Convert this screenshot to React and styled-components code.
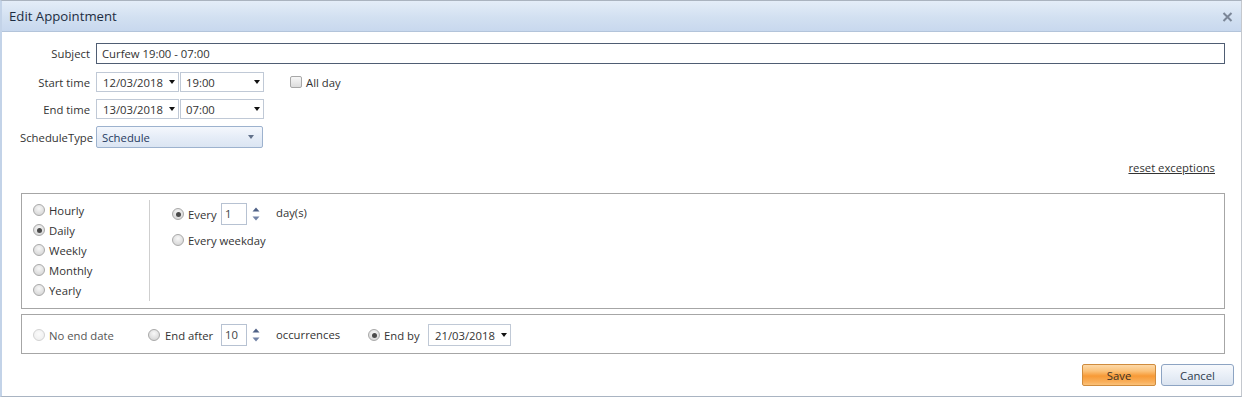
import React from "react";
import styled, { createGlobalStyle, css } from "styled-components";

const GlobalStyle = createGlobalStyle`
  html, body { margin: 0; padding: 0; background: #ffffff; }
  body { font-family: "Open Sans", "Noto Sans", sans-serif; font-size: 11.3px; color: #333333; }
  * { box-sizing: border-box; }
`;

const Dialog = styled.div`
  width: 1242px;
  height: 397px;
  border-top: 1px solid #aab3bf;
  border-left: 2px solid #c3d3e8;
  border-right: 1px solid #c4c8ce;
  border-bottom: 1px solid #a9b4c2;
  display: flex;
  flex-direction: column;
  background: #fff;
`;

const TitleBar = styled.div`
  height: 31px;
  flex: none;
  display: flex;
  align-items: center;
  justify-content: space-between;
  padding: 0 8px 0 7px;
  background: linear-gradient(#e4edf8, #d2e0f1 55%, #c8d8ee);
  border-bottom: 1px solid #b3c4da;
`;

const Title = styled.div`
  font-size: 13.2px;
  color: #1d2d42;
  margin-top: -1px;
`;

const Close = styled.button`
  border: 0;
  background: none;
  padding: 0;
  width: 11px;
  height: 10px;
  display: flex;
  margin-top: 1px;
`;

const Body = styled.div`
  flex: 1;
  display: flex;
  flex-direction: column;
  padding: 11px 16px 9px 18px;
`;

const FormRow = styled.div`
  display: flex;
  align-items: center;
  height: ${(p) => p.$h}px;
  margin-top: ${(p) => p.$mt || 0}px;
`;

const Label = styled.div`
  width: 76px;
  flex: none;
  padding-right: 6px;
  text-align: right;
  white-space: nowrap;
  color: #333;
`;

const TextInput = styled.input`
  flex: 1;
  height: 21px;
  border: 1px solid #4f5d73;
  padding: 0 5px;
  font: inherit;
  color: #333;
  outline: none;
`;

const DropBox = styled.div`
  width: ${(p) => p.$w}px;
  height: 20px;
  flex: none;
  display: flex;
  align-items: center;
  justify-content: space-between;
  border: 1px solid #c0c9d6;
  padding: 0 ${(p) => p.$pr}px 0 ${(p) => p.$pl}px;
  margin-left: ${(p) => p.$ml || 0}px;
  color: #333;
  background: #fff;
  ${(p) =>
    p.$tall &&
    css`
      height: 22px;
    `}
`;

const Caret = styled.span`
  width: 0;
  height: 0;
  border-left: 3.5px solid transparent;
  border-right: 3.5px solid transparent;
  border-top: 4px solid ${(p) => p.$color || "#111"};
  margin-top: -1px;
`;

const SelectBox = styled.div`
  width: 167px;
  height: 22px;
  display: flex;
  align-items: center;
  justify-content: space-between;
  padding: 0 8px 0 5px;
  border: 1px solid #9db2ce;
  border-radius: 2px;
  background: linear-gradient(#f4f7fc, #e6edf7 50%, #dbe5f2);
  color: #1f3a5f;
`;

const CheckWrap = styled.label`
  display: flex;
  align-items: center;
  gap: 4px;
  margin-left: 26px;
  color: #333;
`;

const Checkbox = styled.span`
  width: 12px;
  height: 12px;
  border: 1px solid #a7a7a7;
  border-radius: 2px;
  background: linear-gradient(#f7f7f7, #dcdcdc);
`;

const ResetRow = styled.div`
  margin-top: 11px;
  height: 16px;
  display: flex;
  justify-content: flex-end;
  align-items: center;
  padding-right: 10px;
`;

const ResetLink = styled.a`
  color: #333;
  text-decoration: underline;
  cursor: pointer;
`;

const Frame = styled.div`
  border: 1px solid #a6a6a6;
  margin-left: 1px;
  margin-top: ${(p) => p.$mt}px;
  display: flex;
`;

const PatternList = styled.div`
  width: 127px;
  padding: 6px 0 8px 11px;
  display: flex;
  flex-direction: column;
`;

const Divider = styled.div`
  width: 1px;
  background: #cfcfcf;
  margin: 6px 0 7px;
`;

const Detail = styled.div`
  padding: 9px 0 0 22px;
  display: flex;
  flex-direction: column;
`;

const Line = styled.div`
  display: flex;
  align-items: center;
  height: ${(p) => p.$h}px;
  margin-top: ${(p) => p.$mt || 0}px;
`;

const Choice = styled.label`
  display: flex;
  align-items: center;
  gap: ${(p) => (p.$gap !== undefined ? p.$gap : 4)}px;
  height: 20px;
  width: ${(p) => (p.$w ? `${p.$w}px` : "auto")};
  flex: none;
  color: ${(p) => (p.$disabled ? "#555" : "#333")};
  white-space: nowrap;
`;

const Radio = styled.span`
  width: 12px;
  height: 12px;
  border-radius: 50%;
  flex: none;
  border: 1px solid ${(p) => (p.$disabled ? "#d2d2d2" : "#a9a9a9")};
  background: ${(p) =>
    p.$disabled
      ? "radial-gradient(circle at 50% 40%, #fbfbfb, #ececec)"
      : "radial-gradient(circle at 50% 35%, #f8f8f8, #d9d9d9 75%)"};
  display: flex;
  align-items: center;
  justify-content: center;
  &::after {
    content: "";
    width: 5px;
    height: 5px;
    border-radius: 50%;
    background: #4a4a4a;
    display: ${(p) => (p.$checked ? "block" : "none")};
  }
`;

const NumberBox = styled.div`
  width: 26px;
  height: 22px;
  border: 1px solid #b7c2d2;
  padding: 2px 0 0 3px;
  color: #444;
  flex: none;
`;

const SpinWrap = styled.div`
  display: flex;
  flex-direction: column;
  gap: 4px;
  margin-left: 5px;
  width: 8px;
  flex: none;
`;

const Tail = styled.span`
  margin-left: ${(p) => p.$ml}px;
  width: ${(p) => (p.$w ? `${p.$w}px` : "auto")};
  flex: none;
  margin-top: ${(p) => p.$mt || 0}px;
  color: #333;
`;

const RangeRow = styled.div`
  display: flex;
  align-items: center;
  padding: 9px 0 7px 11px;
`;

const ButtonRow = styled.div`
  margin-top: 10px;
  margin-right: -9px;
  display: flex;
  justify-content: flex-end;
  gap: 5px;
`;

const Button = styled.button`
  font: inherit;
  width: ${(p) => p.$w}px;
  height: 22px;
  padding: 0;
  cursor: pointer;
  ${(p) =>
    p.$primary
      ? css`
          border: 1px solid #cf8c3e;
          border-radius: 2px;
          color: #3a3026;
          background: linear-gradient(#fdd9a8, #fbc27a 30%, #f79a36 55%, #f9b05c 85%, #fbc27a);
        `
      : css`
          border: 1px solid #8da4c3;
          border-radius: 3px;
          color: #2d3a4c;
          background: linear-gradient(#f7f9fc, #e9eff7 50%, #dbe4f0);
        `}
`;

function Spinner() {
  return (
    <SpinWrap>
      <svg width="8" height="5" viewBox="0 0 8 5">
        <path d="M4 0.5 L7.5 4.5 L0.5 4.5 Z" fill="#4f6186" />
      </svg>
      <svg width="8" height="5" viewBox="0 0 8 5">
        <path d="M0.5 0.5 L7.5 0.5 L4 4.5 Z" fill="#7182a6" />
      </svg>
    </SpinWrap>
  );
}

const patterns = [
  { label: "Hourly" },
  { label: "Daily", checked: true },
  { label: "Weekly" },
  { label: "Monthly" },
  { label: "Yearly" },
];

export default function App() {
  return (
    <>
      <GlobalStyle />
      <Dialog>
        <TitleBar>
          <Title>Edit Appointment</Title>
          <Close aria-label="Close">
            <svg width="11" height="10" viewBox="0 0 11 10">
              <path d="M1.5 1 L9.5 9 M9.5 1 L1.5 9" stroke="#7b8697" strokeWidth="2" />
            </svg>
          </Close>
        </TitleBar>
        <Body>
          <FormRow $h={21}>
            <Label>Subject</Label>
            <TextInput defaultValue="Curfew 19:00 - 07:00" />
          </FormRow>
          <FormRow $h={20} $mt={8}>
            <Label>Start time</Label>
            <DropBox $w={83} $pl={6} $pr={3}>
              12/03/2018 <Caret />
            </DropBox>
            <DropBox $w={84} $pl={5} $pr={3} $ml={1}>
              19:00 <Caret />
            </DropBox>
            <CheckWrap>
              <Checkbox />
              All day
            </CheckWrap>
          </FormRow>
          <FormRow $h={20} $mt={7}>
            <Label>End time</Label>
            <DropBox $w={83} $pl={6} $pr={3}>
              13/03/2018 <Caret />
            </DropBox>
            <DropBox $w={84} $pl={5} $pr={3} $ml={1}>
              07:00 <Caret />
            </DropBox>
          </FormRow>
          <FormRow $h={22} $mt={7}>
            <Label>ScheduleType</Label>
            <SelectBox>
              Schedule <Caret $color="#62718a" />
            </SelectBox>
          </FormRow>
          <ResetRow>
            <ResetLink>reset exceptions</ResetLink>
          </ResetRow>
          <Frame $mt={18}>
            <PatternList>
              {patterns.map((p) => (
                <Choice key={p.label}>
                  <Radio $checked={p.checked} />
                  {p.label}
                </Choice>
              ))}
            </PatternList>
            <Divider />
            <Detail>
              <Line $h={22}>
                <Choice $w={49}>
                  <Radio $checked />
                  Every
                </Choice>
                <NumberBox>1</NumberBox>
                <Spinner />
                <Tail $ml={16} $mt={-3}>day(s)</Tail>
              </Line>
              <Line $h={20} $mt={5}>
                <Choice>
                  <Radio />
                  Every weekday
                </Choice>
              </Line>
            </Detail>
          </Frame>
          <Frame $mt={5}>
            <RangeRow>
              <Choice $w={115} $disabled>
                <Radio $disabled />
                No end date
              </Choice>
              <Choice $w={73} $gap={5}>
                <Radio />
                End after
              </Choice>
              <NumberBox>10</NumberBox>
              <Spinner />
              <Tail $ml={16} $w={92} $mt={-2}>occurrences</Tail>
              <Choice $w={60}>
                <Radio $checked />
                End by
              </Choice>
              <DropBox $w={83} $pl={6} $pr={3} $tall>
                21/03/2018 <Caret />
              </DropBox>
            </RangeRow>
          </Frame>
          <ButtonRow>
            <Button $primary $w={74}>Save</Button>
            <Button $w={73}>Cancel</Button>
          </ButtonRow>
        </Body>
      </Dialog>
    </>
  );
}
